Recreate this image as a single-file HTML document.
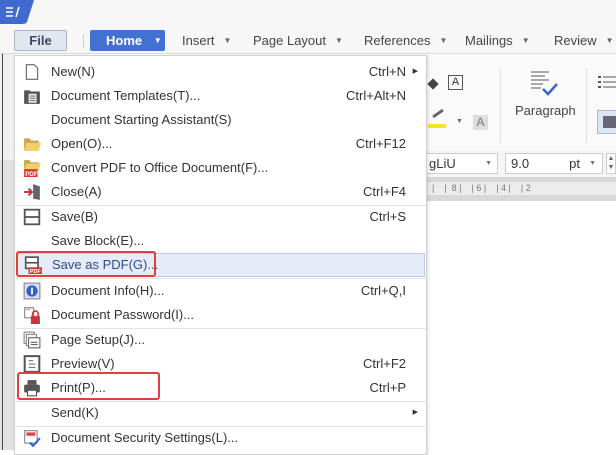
<!DOCTYPE html>
<html><head><meta charset="utf-8"><style>
*{margin:0;padding:0;box-sizing:border-box}
body{width:616px;height:450px;overflow:hidden;background:#fff;font-family:"Liberation Sans",sans-serif;position:relative;color:#333}
.abs{position:absolute}
.tab{position:absolute;top:33px;font-size:13px;color:#444}
.tab .ar{font-size:8px;color:#666;margin-left:9px;vertical-align:2px}
.menu{position:absolute;left:14px;top:55px;width:413px;height:400px;background:#fff;border:1px solid #d0d0d0;box-shadow:1px 1px 3px rgba(0,0,0,.15)}
.it{position:absolute;left:0;width:411px;height:24px;font-size:13px;color:#333;line-height:24px}
.it .t{position:absolute;left:36px}
.it .k{position:absolute;right:20px}
.it .ic{position:absolute;left:8px;top:3px;width:18px;height:18px}
.sep{position:absolute;left:1px;width:410px;height:1px;background:#e3e3e3}
.red{position:absolute;border:2px solid #e0403a;border-radius:3px}
</style></head><body>
<div class="abs" style="left:0;top:0;width:616px;height:54px;background:#f7f7f7"></div>
<div class="abs" style="left:0;top:53px;width:616px;height:1px;background:#dcdcdc"></div>
<svg class="abs" style="left:0;top:0" width="36" height="25"><path d="M0 0H34L27 22Q26 24 22 24H0Z" fill="#3f6ad0"/><g stroke="#fff" stroke-width="1.5"><path d="M6 8h7M6 12h7M6 16h7"/><path d="M16 17L19 7"/></g></svg>
<div class="abs" style="left:14px;top:30px;width:53px;height:21px;background:#e1e6ef;border:1px solid #a9b5cb;border-radius:2px;font-size:13px;font-weight:bold;color:#3a4a66;text-align:center;line-height:19px">File</div>
<div class="abs" style="left:83px;top:34px;width:1px;height:14px;background:#d0d0d0"></div>
<div class="abs" style="left:90px;top:30px;width:75px;height:21px;background:#4371d2;border-radius:2px;font-size:13px;font-weight:bold;color:#fff;line-height:21px;padding-left:16px">Home <span style="font-size:8px;margin-left:8px;vertical-align:2px">▼</span></div>
<div class="tab" style="left:182px">Insert<span class="ar">▼</span></div>
<div class="tab" style="left:253px">Page Layout<span class="ar">▼</span></div>
<div class="tab" style="left:364px">References<span class="ar">▼</span></div>
<div class="tab" style="left:465px">Mailings<span class="ar">▼</span></div>
<div class="tab" style="left:554px">Review<span class="ar">▼</span></div>
<div class="abs" style="left:427px;top:54px;width:189px;height:96px;background:#fafafa"></div>
<div class="abs" style="left:448px;top:75px;width:15px;height:15px;border:1px solid #555;font-size:11px;text-align:center;line-height:13px">A</div>
<div class="abs" style="left:429px;top:80px;width:8px;height:8px;background:#444;transform:rotate(45deg)"></div>
<div class="abs" style="left:432px;top:112px;width:12px;height:3px;background:#666;transform:rotate(-35deg)"></div>
<div class="abs" style="left:428px;top:124px;width:18px;height:4px;background:#f2e81a"></div>
<div class="abs" style="left:456px;top:118px;font-size:7px;color:#666">▼</div>
<div class="abs" style="left:473px;top:115px;width:15px;height:15px;background:#ddd;color:#777;font-size:12px;text-align:center;line-height:15px">A</div>
<div class="abs" style="left:500px;top:68px;width:1px;height:75px;background:#e0e0e0"></div>
<svg class="abs" style="left:530px;top:70px" width="30" height="28"><g stroke="#777" stroke-width="1.3"><path d="M1 2h18M1 6h14M1 10h18M1 14h12M1 18h10"/></g><path d="M13 19l5 5 9-10" stroke="#3d65c7" stroke-width="2.5" fill="none"/></svg>
<div class="abs" style="left:515px;top:103px;font-size:13px;color:#444">Paragraph</div>
<div class="abs" style="left:586px;top:68px;width:1px;height:75px;background:#e0e0e0"></div>
<svg class="abs" style="left:598px;top:75px" width="18" height="16"><g fill="#555"><rect x="0" y="1" width="3" height="2"/><rect x="0" y="6" width="3" height="2"/><rect x="0" y="11" width="3" height="2"/></g><g stroke="#555"><path d="M5 2h13M5 7h13M5 12h13"/></g></svg>
<div class="abs" style="left:597px;top:110px;width:19px;height:24px;background:#dde4f2;border:1px solid #a8b8d8;border-right:none"></div>
<div class="abs" style="left:603px;top:116px;width:13px;height:12px;background:#667"></div>
<div class="abs" style="left:427px;top:150px;width:189px;height:27px;background:#f5f5f5"></div>
<div class="abs" style="left:420px;top:153px;width:78px;height:21px;background:#fff;border:1px solid #ccc;font-size:13px;line-height:19px;padding-left:8px">gLiU<span style="position:absolute;right:5px;font-size:7px;color:#777">▼</span></div>
<div class="abs" style="left:505px;top:153px;width:98px;height:21px;background:#fff;border:1px solid #ccc;font-size:13px;line-height:19px;padding-left:5px">9.0<span style="position:absolute;right:22px">pt</span><span style="position:absolute;right:6px;font-size:7px;color:#777">▼</span></div>
<div class="abs" style="left:606px;top:153px;width:10px;height:21px;background:#fff;border:1px solid #ccc;font-size:7px;color:#666;line-height:9px;text-align:center">▲<br>▼</div>
<div class="abs" style="left:427px;top:177px;width:189px;height:24px;background:#d8d8d8"></div>
<div class="abs" style="left:427px;top:182px;width:189px;height:13px;background:#ececec;font-size:9px;color:#777;line-height:13px;white-space:pre">  |    |  8 |    | 6 |    | 4 |    | 2</div>
<div class="abs" style="left:427px;top:201px;width:189px;height:249px;background:#fff"></div>
<div class="abs" style="left:0;top:54px;width:14px;height:396px;background:#f0f0f0"></div>
<div class="abs" style="left:0;top:160px;width:14px;height:290px;background:#e2e2e2"></div>
<div class="abs" style="left:2px;top:54px;width:1px;height:396px;background:#444"></div>
<div class="menu">
<div class="it" style="top:4px"><svg class="ic" viewBox="0 0 16 16"><path d="M3 1.5h7l3 3v10H3z" fill="#fff" stroke="#666"/></svg><span class="t">New(N)</span><span class="k">Ctrl+N <span style="font-size:7px;position:absolute;right:-12px;top:0">▶</span></span></div>
<div class="it" style="top:28px"><svg class="ic" viewBox="0 0 16 16"><path d="M1 3h5l1 1h8v11H1z" fill="#555"/><rect x="5" y="6" width="7" height="8" fill="#eee"/><path d="M6 8h5M6 10h5M6 12h5" stroke="#777"/></svg><span class="t">Document Templates(T)...</span><span class="k">Ctrl+Alt+N</span></div>
<div class="it" style="top:52px"><span class="t">Document Starting Assistant(S)</span></div>
<div class="it" style="top:76px"><svg class="ic" viewBox="0 0 16 16"><path d="M1 3h5l1 2h7v9H1z" fill="#c9a44a"/><path d="M3 7h13l-2 7H1z" fill="#f0cf6c"/></svg><span class="t">Open(O)...</span><span class="k">Ctrl+F12</span></div>
<div class="it" style="top:100px"><svg class="ic" viewBox="0 0 16 16"><path d="M1 1h5l1 2h7v7H1z" fill="#c9a44a"/><path d="M3 4h13l-2 6H1z" fill="#f0cf6c"/><rect x="1" y="9" width="12" height="7" fill="#d9382e"/><text x="2" y="15" font-size="5.5" fill="#fff" font-family="Liberation Sans" font-weight="bold">PDF</text></svg><span class="t">Convert PDF to Office Document(F)...</span></div>
<div class="it" style="top:124px"><svg class="ic" viewBox="0 0 16 16"><path d="M1 8h6M5 5l3 3-3 3" stroke="#c9353a" stroke-width="1.8" fill="none"/><path d="M9 1l6 2v12l-6-1z" fill="#666"/></svg><span class="t">Close(A)</span><span class="k">Ctrl+F4</span></div>
<div class="sep" style="top:149px"></div>
<div class="it" style="top:149px"><svg class="ic" viewBox="0 0 16 16"><rect x="1.5" y="1.5" width="13" height="13" fill="#fff" stroke="#555" stroke-width="1.6"/><path d="M2 8h12" stroke="#555" stroke-width="1.6"/></svg><span class="t">Save(B)</span><span class="k">Ctrl+S</span></div>
<div class="it" style="top:173px"><span class="t">Save Block(E)...</span></div>
<div class="it" style="top:197px;left:2px;width:408px;background:#e5ebf8;border:1px solid #bccbe8;height:24px"><svg class="ic" style="left:6px;top:2px" viewBox="0 0 16 16"><rect x="1.5" y="1" width="11" height="10" fill="#fff" stroke="#555" stroke-width="1.5"/><path d="M2 6h10" stroke="#555" stroke-width="1.5"/><rect x="4" y="10" width="12" height="6" fill="#d9382e"/><text x="5" y="15" font-size="5" fill="#fff" font-family="Liberation Sans" font-weight="bold">PDF</text></svg><span class="t" style="left:34px;color:#2d4d8f;line-height:22px">Save as PDF(G)...</span></div>
<div class="sep" style="top:222px"></div>
<div class="it" style="top:223px"><svg class="ic" viewBox="0 0 16 16"><rect x="1" y="1" width="14" height="14" fill="#dde" stroke="#889"/><circle cx="8" cy="8" r="5" fill="#3160c9"/><rect x="7.2" y="5" width="1.6" height="6" fill="#fff"/></svg><span class="t">Document Info(H)...</span><span class="k">Ctrl+Q,I</span></div>
<div class="it" style="top:247px"><svg class="ic" viewBox="0 0 16 16"><path d="M1.5 1.5h8v9h-8z" fill="#fff" stroke="#888"/><path d="M3 3h1M5 3h1" stroke="#c33"/><rect x="7" y="9" width="8" height="7" fill="#c9353a"/><path d="M8.5 9V7a2.5 2.5 0 015 0v2" stroke="#c9353a" fill="none" stroke-width="1.4"/></svg><span class="t">Document Password(I)...</span></div>
<div class="sep" style="top:272px"></div>
<div class="it" style="top:272px"><svg class="ic" viewBox="0 0 16 16"><rect x="1" y="1" width="9" height="10" fill="#fff" stroke="#888"/><rect x="3" y="3" width="9" height="10" fill="#fff" stroke="#888"/><rect x="5" y="6" width="10" height="9" fill="#fff" stroke="#666"/><path d="M7 10h6M7 12h6" stroke="#666"/></svg><span class="t">Page Setup(J)...</span></div>
<div class="it" style="top:296px"><svg class="ic" viewBox="0 0 16 16"><rect x="1.5" y="1" width="13" height="14" fill="#fff" stroke="#555" stroke-width="1.8"/><path d="M5 5h4M5 8h6M5 11h6" stroke="#777"/></svg><span class="t">Preview(V)</span><span class="k">Ctrl+F2</span></div>
<div class="it" style="top:320px"><svg class="ic" viewBox="0 0 16 16"><rect x="4" y="1" width="8" height="4" fill="#555"/><rect x="1" y="5" width="14" height="7" rx="1.5" fill="#555"/><rect x="4" y="10" width="8" height="5" fill="#fff" stroke="#555"/></svg><span class="t">Print(P)...</span><span class="k">Ctrl+P</span></div>
<div class="sep" style="top:345px"></div>
<div class="it" style="top:345px"><span class="t">Send(K)</span><span class="k" style="font-size:7px;right:8px">▶</span></div>
<div class="sep" style="top:370px"></div>
<div class="it" style="top:370px"><svg class="ic" viewBox="0 0 16 16"><rect x="1.5" y="1.5" width="11" height="11" fill="#fff" stroke="#888"/><rect x="3" y="3" width="8" height="3" fill="#d9474a"/><path d="M6 12l3 3 6-7" stroke="#3160c9" stroke-width="1.8" fill="none"/></svg><span class="t">Document Security Settings(L)...</span></div>
</div>
<div class="red" style="left:16px;top:251px;width:140px;height:26px"></div>
<div class="red" style="left:17px;top:372px;width:143px;height:28px"></div>
</body></html>
